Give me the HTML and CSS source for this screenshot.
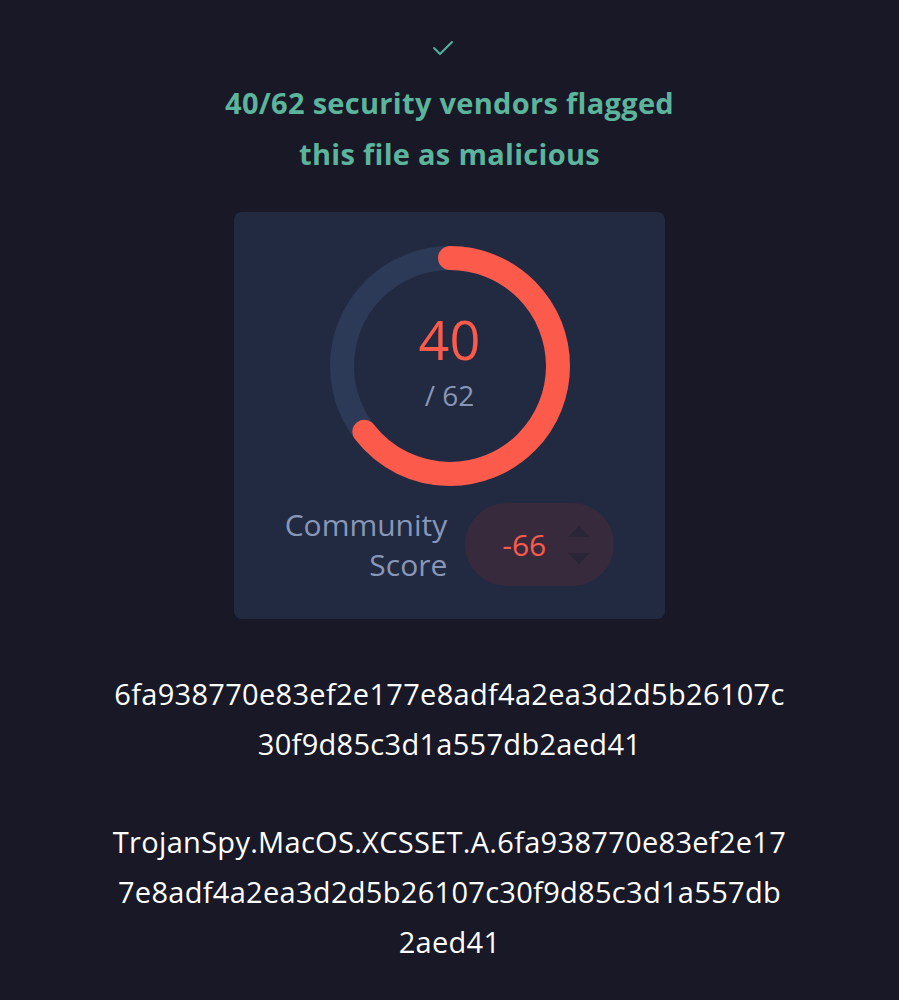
FILE: index.html
```html
<!DOCTYPE html>
<html lang="en">
<head>
    <meta charset="UTF-8">
    <title>Detection</title>
    <meta name="viewport" content="width=device-width, initial-scale=1.0">
    <link rel="stylesheet" href="styles.css">
</head>
<body>
    <main class="report">
        <div class="check">
            <svg width="24" height="16" viewBox="0 0 24 16">
                <path d="M3 8 L9 14 L21 2" fill="none" stroke="#4fb29b" stroke-width="2" stroke-linecap="round" stroke-linejoin="round"/>
            </svg>
        </div>

        <h1 class="verdict">40/62 security vendors flagged<br>this file as malicious</h1>

        <section class="score-card">
            <div class="ring">
                <svg width="240" height="240" viewBox="0 0 240 240">
                    <circle cx="120" cy="120" r="108" fill="none" stroke="#2c3a57" stroke-width="24"/>
                    <circle cx="120" cy="120" r="108" fill="none" stroke="#fc5a4a" stroke-width="24"
                        stroke-linecap="round" stroke-dasharray="437.7 678.6"
                        transform="rotate(-90 120 120)"/>
                </svg>
                <div class="ring-label">
                    <span class="ring-count">40</span>
                    <span class="ring-total">/ 62</span>
                </div>
            </div>

            <div class="community">
                <div class="community-label">Community<br>Score</div>
                <div class="community-pill">
                    <span class="community-value">-66</span>
                    <div class="votes">
                        <svg width="26" height="44" viewBox="0 0 26 44">
                            <path d="M2 14 L13 3 L24 14 Z" fill="#2a2537"/>
                            <path d="M2 30 L13 41 L24 30 Z" fill="#2a2537"/>
                        </svg>
                    </div>
                </div>
            </div>
        </section>

        <p class="hash">
            <span class="line">6fa938770e83ef2e177e8adf4a2ea3d2d5b26107c</span>
            <span class="line">30f9d85c3d1a557db2aed41</span>
        </p>

        <p class="hash">
            <span class="line">TrojanSpy.MacOS.XCSSET.A.6fa938770e83ef2e17</span>
            <span class="line">7e8adf4a2ea3d2d5b26107c30f9d85c3d1a557db</span>
            <span class="line">2aed41</span>
        </p>
    </main>
</body>
</html>
```

FILE: styles.css
```css
* {
    margin: 0;
    padding: 0;
    box-sizing: border-box;
}

body {
    background: #181827;
    color: #ffffff;
    font-family: "Open Sans", "Noto Sans", sans-serif;
    height: 100vh;
    overflow: hidden;
}

.report {
    display: flex;
    flex-direction: column;
    align-items: center;
    padding-top: 40px;
}

.check {
    height: 16px;
    display: flex;
    margin-right: 14px;
}

.verdict {
    margin-top: 21px;
    font-size: 29px;
    font-weight: 700;
    line-height: 51px;
    letter-spacing: 0.3px;
    color: #5bb49b;
    text-align: center;
}

.score-card {
    margin-top: 33px;
    width: 431px;
    height: 407px;
    background: #222a41;
    border-radius: 8px;
    display: flex;
    flex-direction: column;
    align-items: center;
    padding-top: 34px;
}

.ring {
    position: relative;
    width: 240px;
    height: 240px;
}

.ring-label {
    position: absolute;
    inset: 0;
    display: flex;
    flex-direction: column;
    align-items: center;
    justify-content: center;
}

.ring-count {
    font-size: 54px;
    line-height: 58px;
    color: #fc5a4a;
}

.ring-total {
    font-size: 28px;
    line-height: 54px;
    color: #8997b6;
}

.community {
    margin-top: 17px;
    display: flex;
    align-items: center;
    gap: 18px;
}

.community-label {
    font-size: 30px;
    line-height: 40px;
    color: #8997b6;
    text-align: right;
}

.community-pill {
    width: 149px;
    height: 83px;
    border-radius: 42px;
    background: #372a3d;
    display: flex;
    align-items: center;
    padding-left: 37px;
    gap: 20px;
}

.community-value {
    font-size: 30px;
    color: #fc5a4a;
}

.votes {
    display: flex;
}

.hash {
    margin-top: 50px;
    text-align: center;
    font-size: 29px;
    line-height: 50px;
    letter-spacing: 0.3px;
}

.hash + .hash {
    margin-top: 48px;
}

.line {
    display: block;
}
```
